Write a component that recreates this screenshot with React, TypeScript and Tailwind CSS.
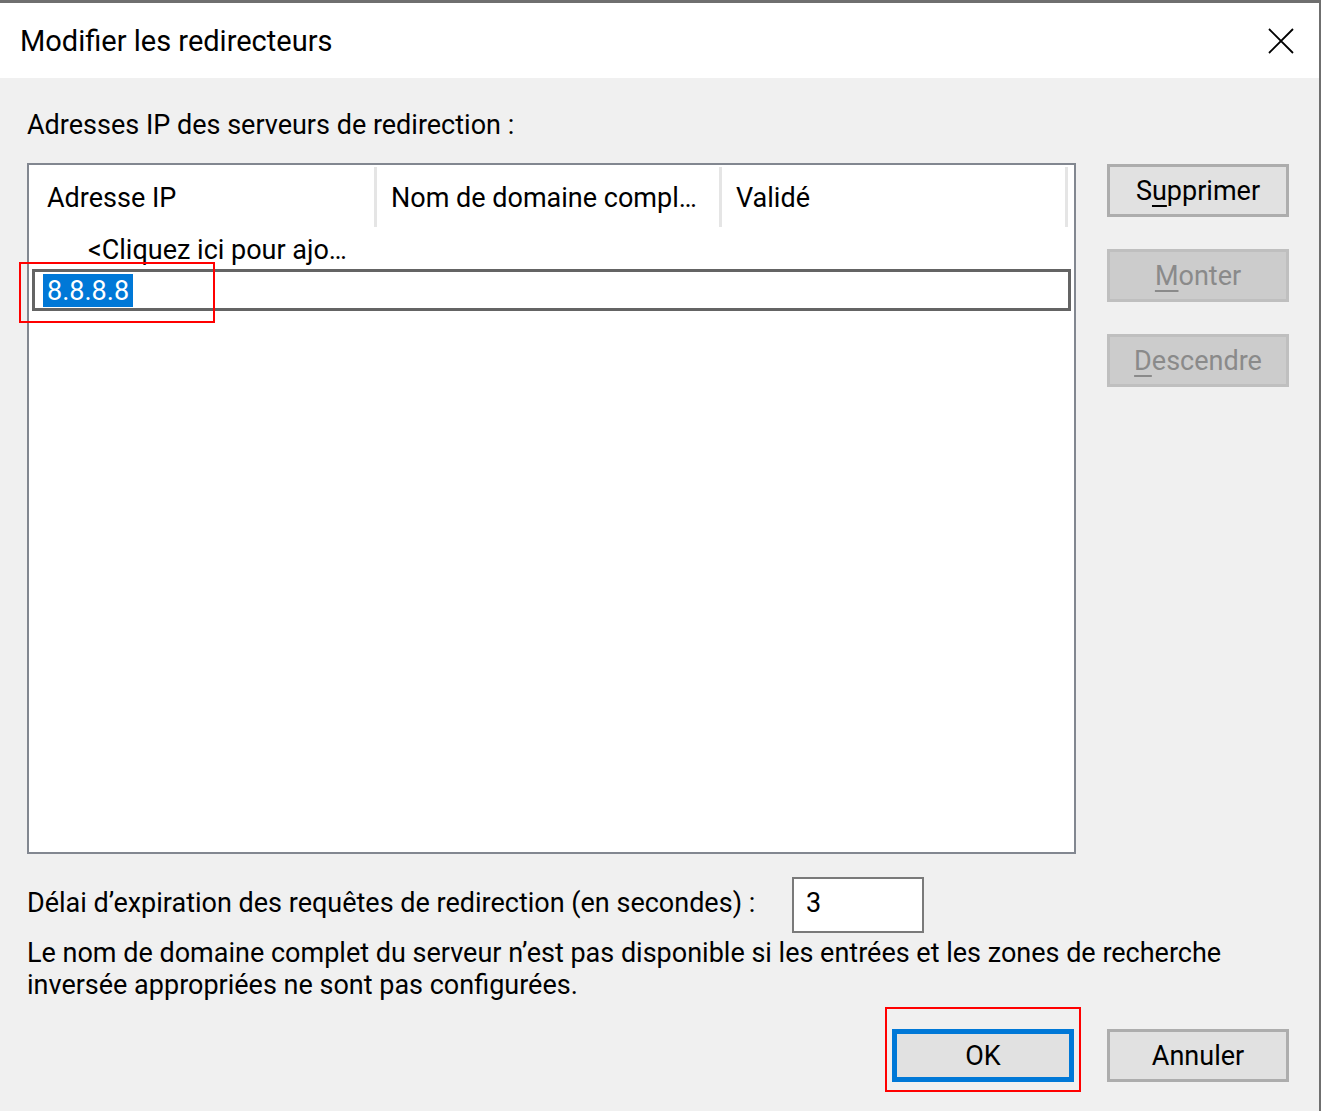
import React from 'react';

const Btn: React.FC<{ label: React.ReactNode; disabled?: boolean }> = ({ label, disabled }) => (
  <div
    className={
      disabled
        ? 'w-[182px] h-[53px] flex items-center justify-center bg-[#cccccc] border-[3px] border-[#bfbfbf] text-[#8a8a8a]'
        : 'w-[182px] h-[53px] flex items-center justify-center bg-[#e1e1e1] border-[3px] border-[#adadad] text-black'
    }
  >
    {label}
  </div>
);

const Mn: React.FC<{ children: React.ReactNode }> = ({ children }) => (
  <span className="underline decoration-2 underline-offset-[5px]">{children}</span>
);

export default function App() {
  return (
    <div
      className="w-[1321px] h-[1111px] bg-[#f0f0f0] border-t-[3px] border-r-[2px] border-[#6f6f6f] flex flex-col text-[27px] leading-[32px] text-black overflow-hidden"
      style={{ fontFamily: 'Roboto, "Noto Sans", sans-serif' }}
    >
      {/* title bar */}
      <div className="h-[75px] bg-white flex items-center justify-between pl-[20px] pr-[25px] shrink-0">
        <span className="text-[29px]">Modifier les redirecteurs</span>
        <svg width="26" height="26" viewBox="0 0 26 26">
          <path d="M1 1 L25 25 M25 1 L1 25" stroke="#000" strokeWidth="1.8" />
        </svg>
      </div>

      <div className="flex flex-col pl-[27px] pr-[30px] pt-[31px]">
        <div>Adresses IP des serveurs de redirection :</div>

        <div className="flex gap-[31px] mt-[22px]">
          {/* list view */}
          <div className="relative w-[1049px] h-[691px] border-2 border-[#828790] bg-white">
            <div className="flex h-[62px]">
              <div className="w-[345px] pl-[18px] pt-[17px]">Adresse IP</div>
              <div className="w-[3px] mt-[2px] bg-[#e5e5e5]" />
              <div className="w-[342px] pl-[14px] pt-[17px] whitespace-nowrap">Nom de domaine compl…</div>
              <div className="w-[3px] mt-[2px] bg-[#e5e5e5]" />
              <div className="w-[343px] pl-[14px] pt-[17px]">Validé</div>
              <div className="w-[3px] mt-[2px] bg-[#e5e5e5]" />
            </div>
            <div className="h-[42px] pl-[59px] pt-[7px] whitespace-nowrap">&lt;Cliquez ici pour ajo…</div>
            <div className="mx-[3px] h-[42px] border-[3px] border-[#646464] flex items-start pt-[2px] pl-[8px]">
              <span className="bg-[#0078d7] text-white px-[4px] h-[33px] flex items-center">8.8.8.8</span>
            </div>
            <div className="absolute -left-[10px] top-[97px] w-[196px] h-[61px] border-2 border-[#ff0000]" />
          </div>

          {/* side buttons */}
          <div className="flex flex-col gap-[32px] pt-[1px]">
            <Btn label={<span>S<Mn>u</Mn>pprimer</span>} />
            <Btn disabled label={<span><Mn>M</Mn>onter</span>} />
            <Btn disabled label={<span><Mn>D</Mn>escendre</span>} />
          </div>
        </div>

        <div className="flex items-center mt-[23px]">
          <div className="w-[765px] whitespace-nowrap pb-[4px]">Délai d’expiration des requêtes de redirection (en secondes) :</div>
          <div className="w-[132px] h-[56px] bg-white border-2 border-[#7a7a7a] flex items-center pl-[12px] pb-[4px]">3</div>
        </div>

        <p className="mt-[4px]">
          Le nom de domaine complet du serveur n’est pas disponible si les entrées et les zones de recherche
          <br />
          inversée appropriées ne sont pas configurées.
        </p>

        <div className="flex justify-end gap-[33px] mt-[28px]">
          <div className="relative">
            <div className="w-[182px] h-[53px] flex items-center justify-center bg-[#e1e1e1] border-[5px] border-[#0078d7]">OK</div>
            <div className="absolute -left-[7px] -top-[22px] w-[196px] h-[85px] border-2 border-[#ff0000]" />
          </div>
          <Btn label="Annuler" />
        </div>
      </div>
    </div>
  );
}
